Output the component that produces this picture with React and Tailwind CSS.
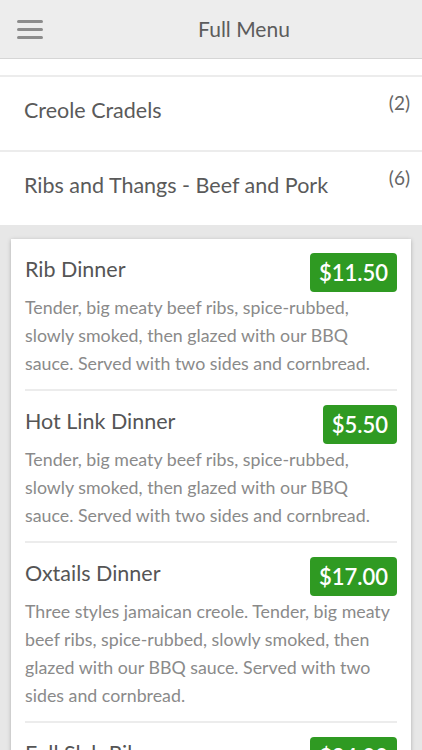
import { Menu } from "lucide-react";

const categories = [
  { name: "Creole Cradels", count: 2 },
  { name: "Ribs and Thangs - Beef and Pork", count: 6 },
];

const items = [
  {
    name: "Rib Dinner",
    price: "$11.50",
    desc: "Tender, big meaty beef ribs, spice-rubbed, slowly smoked, then glazed with our BBQ sauce. Served with two sides and cornbread.",
  },
  {
    name: "Hot Link Dinner",
    price: "$5.50",
    desc: "Tender, big meaty beef ribs, spice-rubbed, slowly smoked, then glazed with our BBQ sauce. Served with two sides and cornbread.",
  },
  {
    name: "Oxtails Dinner",
    price: "$17.00",
    desc: "Three styles jamaican creole. Tender, big meaty beef ribs, spice-rubbed, slowly smoked, then glazed with our BBQ sauce. Served with two sides and cornbread.",
  },
  {
    name: "Full Slab Ribs",
    price: "$24.00",
    desc: "Tender, big meaty beef ribs, spice-rubbed, slowly smoked, then glazed with our BBQ sauce. Served with two sides and cornbread.",
  },
];

const App = () => {
  return (
    <div
      className="w-[422px] h-[750px] overflow-hidden bg-[#e7e7e7]"
      style={{ fontFamily: "Lato, 'Open Sans', sans-serif" }}
    >
      {/* header */}
      <div className="h-[59px] bg-[#ededed] border-b border-[#d6d6d6] flex items-center">
        <div className="w-[60px] flex justify-center">
          <div className="flex flex-col gap-[5px] w-[26px]">
            <span className="h-[3px] bg-[#8c8c8c] rounded-sm" />
            <span className="h-[3px] bg-[#8c8c8c] rounded-sm" />
            <span className="h-[3px] bg-[#8c8c8c] rounded-sm" />
          </div>
        </div>
        <div className="flex-1 text-center pl-[6px] text-[21px] leading-[26px] text-[#5c5c5c]">
          Full Menu
        </div>
      </div>

      {/* categories */}
      <div className="bg-white pt-[16px]">
        {categories.map((c) => (
          <div
            key={c.name}
            className="h-[75px] border-t-2 border-[#ececec] flex justify-between items-start pl-[24px] pr-[12px]"
          >
            <span className="mt-[20px] text-[21.5px] leading-[26px] text-[#5a5a5a]">
              {c.name}
            </span>
            <span className="mt-[14px] text-[19px] leading-[24px] text-[#666]">
              ({c.count})
            </span>
          </div>
        ))}
      </div>

      {/* items card */}
      <div className="px-[11px] pt-[14px]">
        <div className="bg-white shadow-[0_1px_4px_rgba(0,0,0,0.25)] px-[14px]">
          {items.map((it, i) => (
            <div
              key={it.name}
              className={
                "pt-[14px] pb-[12px] " +
                (i < items.length - 1 ? "border-b-2 border-[#ececec]" : "")
              }
            >
              <div className="flex justify-between items-start">
                <span className="mt-[3px] text-[21.5px] leading-[26px] text-[#555]">
                  {it.name}
                </span>
                <span className="h-[39px] px-[9px] flex items-center bg-[#2f9a22] rounded-[4px] text-white text-[22px] font-semibold">
                  {it.price}
                </span>
              </div>
              <p className="mt-[1px] text-[17.8px] leading-[28px] text-[#8a8a8a]">
                {it.desc}
              </p>
            </div>
          ))}
        </div>
      </div>
    </div>
  );
};

export default App;
